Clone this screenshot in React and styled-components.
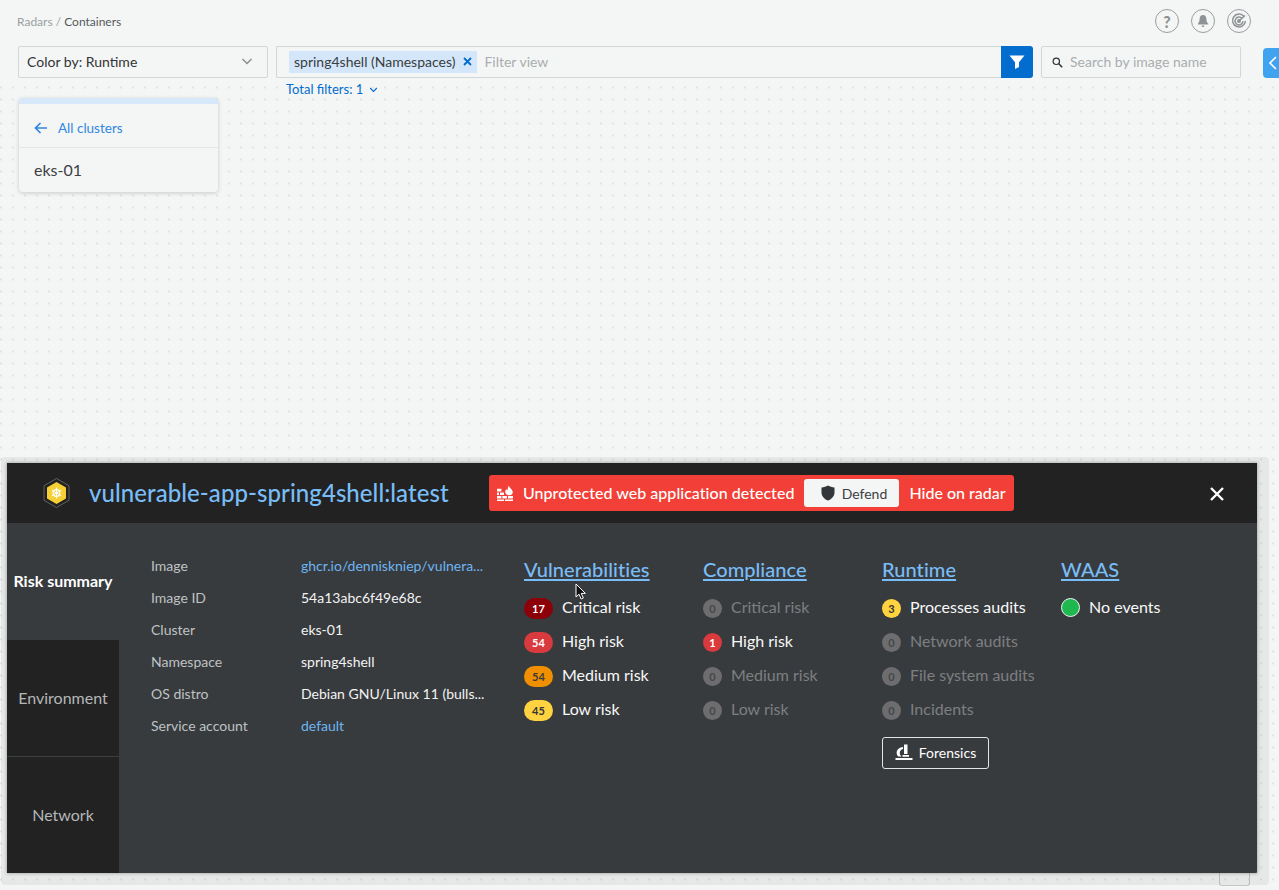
import styled, { createGlobalStyle } from "styled-components";

const Global = createGlobalStyle`
  html, body { margin: 0; padding: 0; height: 100%; overflow: hidden; }
  body { background: #f4f6f6; font-family: Lato, "Open Sans", sans-serif; color: #3c4043; }
  * { box-sizing: border-box; }
`;

const Page = styled.div`
  position: relative;
  width: 1279px;
  height: 890px;
  overflow: hidden;
`;

const Top = styled.header`
  height: 84px;
  padding: 0 0 0 18px;
`;

const TopRow = styled.div`
  display: flex;
  align-items: center;
  justify-content: space-between;
  height: 42px;
  margin-bottom: 4px;
  padding-right: 28px;
`;

const Crumbs = styled.div`
  font-size: 12px;
  color: #9a9fa1;
  margin-left: -1px;
  b { font-weight: 400; color: #55595c; }
`;

const TopIcons = styled.div`
  display: flex;
  gap: 12px;
`;

const RoundIcon = styled.span`
  width: 24px;
  height: 24px;
  border: 1px solid #9a9d9f;
  border-radius: 50%;
  display: flex;
  align-items: center;
  justify-content: center;
  color: #8f9294;
  font-size: 16px;
  font-weight: 900;
`;

const Controls = styled.div`
  display: flex;
  align-items: flex-start;
  & > * { flex-shrink: 0; }
`;

const Select = styled.div`
  width: 250px;
  height: 32px;
  background: #f4f6f6;
  border: 1px solid #d3d6d7;
  border-radius: 2px;
  padding: 0 14px 2px 8px;
  display: flex;
  align-items: center;
  justify-content: space-between;
  font-size: 14px;
  color: #333;
`;

const FilterBox = styled.div`
  width: 725px;
  height: 32px;
  margin-left: 8px;
  border: 1px solid #d3d6d7;
  border-right: 0;
  border-radius: 2px 0 0 2px;
  padding: 0 0 0 12px;
  display: flex;
  align-items: center;
  gap: 7px;
`;

const Chip = styled.span`
  height: 22px;
  background: #d4e7fa;
  padding: 0 5px 1px;
  display: flex;
  align-items: center;
  gap: 8px;
  font-size: 14px;
  color: #3a3d40;
`;

const Placeholder = styled.span`
  font-size: 14px;
  color: #a9adaf;
  padding-bottom: 1px;
`;

const FilterButton = styled.button`
  width: 32px;
  height: 32px;
  border: 0;
  padding: 0;
  background: #026ccf;
  border-radius: 0 3px 3px 0;
  display: flex;
  align-items: center;
  justify-content: center;
`;

const Search = styled.div`
  width: 200px;
  height: 32px;
  margin-left: 8px;
  border: 1px solid #d3d6d7;
  border-radius: 2px;
  padding: 0 0 0 10px;
  display: flex;
  align-items: center;
  gap: 7px;
`;

const SideTab = styled.div`
  width: 30px;
  height: 30px;
  margin: 2px 0 0 22px;
  background: #3fa3f0;
  border-radius: 4px 0 0 4px;
  display: flex;
  align-items: center;
  padding-left: 5px;
`;

const Canvas = styled.main`
  height: 806px;
  padding: 0 0 0 19px;
  background-image: radial-gradient(circle, #e0e3e3 1px, transparent 1.4px);
  background-size: 12px 12px;
  background-position: -5px -2.5px;
`;

const TotalFilters = styled.div`
  height: 10px;
  margin-left: 267px;
  margin-bottom: 4px;
  display: flex;
  align-items: center;
  gap: 6px;
  font-size: 13px;
  color: #026ccf;
`;

const ClusterCard = styled.section`
  width: 199px;
  height: 94px;
  background: #f4f6f6;
  border-top: 6px solid #d6e8fa;
  border-radius: 4px;
  box-shadow: 0 1px 4px rgba(0, 0, 0, 0.18);
`;

const BackRow = styled.div`
  height: 44px;
  padding: 4px 0 0 15px;
  display: flex;
  align-items: center;
  gap: 10px;
  font-size: 13.5px;
  color: #2f86de;
  border-bottom: 1px solid #e3e6e6;
`;

const ClusterName = styled.div`
  height: 44px;
  padding: 0 0 2px 15px;
  display: flex;
  align-items: center;
  font-size: 16px;
  color: #3c4043;
`;

const Drawer = styled.section`
  position: absolute;
  left: 7px;
  top: 463px;
  width: 1250px;
  height: 410px;
  display: flex;
  flex-direction: column;
  background: #383b3e;
  box-shadow: 0 0 3px 1px rgba(0, 0, 0, 0.22), 3px 3px 0 9px rgba(0, 0, 0, 0.055);
  border-radius: 1px;
`;

const LowerTab = styled.div`
  position: absolute;
  left: 1219px;
  top: 873px;
  width: 31px;
  height: 13px;
  border: 1px solid #c4c7c8;
  border-top: 0;
  border-radius: 0 0 3px 3px;
`;

const DrawerHead = styled.div`
  height: 60px;
  flex-shrink: 0;
  background: #222;
  display: flex;
  align-items: center;
  padding-left: 35px;
`;

const Title = styled.h1`
  margin: 0 0 2px 18px;
  width: 400px;
  font-size: 24px;
  font-weight: 500;
  letter-spacing: 0.06px;
  color: #79bdf7;
  white-space: nowrap;
`;

const Alert = styled.div`
  height: 36px;
  width: 525px;
  background: #f23f37;
  border-radius: 3px;
  display: flex;
  align-items: center;
  padding: 0 0 0 7px;
  color: #fff;
  font-size: 16px;
  font-weight: 500;
  white-space: nowrap;
`;

const AlertText = styled.span`
  margin: 0 0 2px 9px;
  letter-spacing: 0.03px;
`;

const HideLink = styled.span`
  margin-bottom: 2px;
`;

const Defend = styled.button`
  width: 95px;
  height: 28px;
  margin: 0 10px 0 10px;
  border: 0;
  padding: 0 0 0 4px;
  background: #f4f6f6;
  border-radius: 3px;
  display: flex;
  align-items: center;
  justify-content: center;
  gap: 7px;
  font-family: inherit;
  font-size: 14px;
  color: #3c4043;
`;

const Close = styled.span`
  margin: 2px 0 0 196px;
  display: flex;
`;

const DrawerBody = styled.div`
  flex: 1;
  display: flex;
`;

const Tabs = styled.nav`
  width: 112px;
  flex-shrink: 0;
  display: flex;
  flex-direction: column;
`;

const Tab = styled.div`
  height: ${(p) => p.$h}px;
  padding-bottom: 2px;
  display: flex;
  align-items: center;
  justify-content: center;
  font-size: 16px;
  white-space: nowrap;
  font-weight: ${(p) => (p.$active ? 700 : 400)};
  color: ${(p) => (p.$active ? "#fff" : "#b4b7b8")};
  background: ${(p) => (p.$active ? "transparent" : "#222")};
  border-top: ${(p) => (p.$line ? "1px solid #3c3e40" : "0")};
`;

const Details = styled.div`
  width: 373px;
  flex-shrink: 0;
  padding: 26px 0 0 32px;
  display: flex;
  flex-direction: column;
`;

const DetailRow = styled.div`
  height: 32px;
  display: flex;
  align-items: center;
  font-size: 14px;
`;

const DetailLabel = styled.span`
  width: 150px;
  flex-shrink: 0;
  color: #bfc2c3;
`;

const DetailValue = styled.span`
  color: ${(p) => (p.$link ? "#6db5f2" : "#f2f3f3")};
  white-space: nowrap;
`;

const Columns = styled.div`
  padding: 31px 0 0 32px;
  display: flex;
`;

const Column = styled.div`
  width: 179px;
  display: flex;
  flex-direction: column;
  align-items: flex-start;
`;

const Heading = styled.a`
  height: 30px;
  font-size: 20px;
  line-height: 30px;
  font-weight: 500;
  letter-spacing: 0.06px;
  color: #79bdf7;
  text-decoration: underline;
  text-decoration-thickness: 1.5px;
  text-underline-offset: 2px;
  margin-bottom: 5px;
`;

const Stat = styled.div`
  height: 34px;
  display: flex;
  align-items: center;
  gap: 9px;
  font-size: 16px;
  white-space: nowrap;
  color: ${(p) => (p.$muted ? "#7d7f81" : "#f7f8f8")};
`;

const Badge = styled.span`
  width: ${(p) => (p.$pill ? 29 : 19)}px;
  height: ${(p) => (p.$pill ? 21 : 19)}px;
  border-radius: 11px;
  display: flex;
  align-items: center;
  justify-content: center;
  font-size: 11px;
  font-weight: 700;
  margin-top: 4px;
  background: ${(p) => p.$bg};
  color: ${(p) => p.$fg};
`;

const GreenDot = styled.span`
  width: 19px;
  height: 19px;
  margin-top: 2px;
  border-radius: 50%;
  background: #1fb84f;
  border: 1px solid #f2f3f3;
`;

const Forensics = styled.button`
  width: 107px;
  height: 32px;
  margin-top: 12px;
  background: transparent;
  border: 1px solid #e4e6e6;
  border-radius: 3px;
  padding: 0 0 1px;
  display: flex;
  align-items: center;
  justify-content: center;
  gap: 6px;
  font-family: inherit;
  font-size: 14px;
  color: #fff;
`;

const Cursor = styled.svg`
  position: absolute;
  left: 575px;
  top: 583px;
`;

const Chevron = ({ size = 12, color = "#8a8e90", width = 1.5 }) => (
  <svg width={size} height={size} viewBox="0 0 12 12" fill="none" stroke={color} strokeWidth={width}>
    <path d="M1.5 4 L6 8.5 L10.5 4" />
  </svg>
);

const vulns = [
  ["17", "Critical risk", "#8c0009", "#fff"],
  ["54", "High risk", "#d93a3e", "#fff"],
  ["54", "Medium risk", "#f09000", "#3c3c3c"],
  ["45", "Low risk", "#ffd23f", "#333"],
];

const compliance = [
  ["0", "Critical risk", true],
  ["1", "High risk", false],
  ["0", "Medium risk", true],
  ["0", "Low risk", true],
];

const runtime = [
  ["3", "Processes audits", false],
  ["0", "Network audits", true],
  ["0", "File system audits", true],
  ["0", "Incidents", true],
];

const details = [
  ["Image", "ghcr.io/denniskniep/vulnera...", true],
  ["Image ID", "54a13abc6f49e68c"],
  ["Cluster", "eks-01"],
  ["Namespace", "spring4shell"],
  ["OS distro", "Debian GNU/Linux 11 (bulls..."],
  ["Service account", "default", true],
];

const Counter = ({ count, label, muted }) => {
  let bg = "#d93a3e";
  let fg = "#fff";
  if (muted) {
    bg = "#6d6d6f";
    fg = "#454749";
  } else if (count === "3") {
    bg = "#ffd23f";
    fg = "#333";
  }
  return (
    <Stat $muted={muted}>
      <Badge $bg={bg} $fg={fg}>{count}</Badge>
      {label}
    </Stat>
  );
};

const App = () => {
  return (
    <Page>
      <Global />
      <Top>
        <TopRow>
          <Crumbs>Radars / <b>Containers</b></Crumbs>
          <TopIcons>
            <RoundIcon>?</RoundIcon>
            <RoundIcon>
              <svg width="14" height="14" viewBox="0 0 14 14" fill="#8f9294">
                <path d="M7 1 C4.6 1 3.6 3 3.6 5 C3.6 7.6 2.6 8.8 1.8 9.8 V10.6 H12.2 V9.8 C11.4 8.8 10.4 7.6 10.4 5 C10.4 3 9.4 1 7 1 Z M5.6 11.4 H8.4 C8.2 12.4 7.6 12.9 7 12.9 C6.4 12.9 5.8 12.4 5.6 11.4 Z" />
              </svg>
            </RoundIcon>
            <RoundIcon>
              <svg width="16" height="16" viewBox="0 0 16 16" fill="none" stroke="#8f9294" strokeWidth="1.5">
                <path d="M13 3.5 A6.4 6.4 0 1 0 14.4 8" />
                <path d="M11 5.5 A3.9 3.9 0 1 0 11.9 8" />
                <path d="M8 8 L14 2.5" />
                <circle cx="8" cy="8" r="1.2" fill="#8f9294" />
              </svg>
            </RoundIcon>
          </TopIcons>
        </TopRow>
        <Controls>
          <Select>
            Color by: Runtime
            <Chevron />
          </Select>
          <FilterBox>
            <Chip>
              spring4shell (Namespaces)
              <svg width="9" height="9" viewBox="0 0 9 9" stroke="#026ccf" strokeWidth="1.8">
                <path d="M1 1 L8 8 M8 1 L1 8" />
              </svg>
            </Chip>
            <Placeholder>Filter view</Placeholder>
          </FilterBox>
          <FilterButton aria-label="Filter">
            <svg width="16" height="16" viewBox="0 0 16 16" fill="#fff">
              <path d="M0.5 1.5 H15.5 L10 8.2 V13 L6 15 V8.2 Z" />
            </svg>
          </FilterButton>
          <Search>
            <svg width="11" height="11" viewBox="0 0 11 11" fill="none" stroke="#333" strokeWidth="1.2">
              <circle cx="4.3" cy="4.3" r="3.2" />
              <path d="M6.8 6.8 L10.2 10.2" strokeWidth="1.6" />
            </svg>
            <Placeholder>Search by image name</Placeholder>
          </Search>
          <SideTab>
            <svg width="10" height="16" viewBox="0 0 10 16" fill="none" stroke="#fff" strokeWidth="1.6">
              <path d="M8 2 L2 8 L8 14" />
            </svg>
          </SideTab>
        </Controls>
      </Top>
      <Canvas>
        <TotalFilters>
          Total filters: 1
          <Chevron size={9} color="#026ccf" />
        </TotalFilters>
        <ClusterCard>
          <BackRow>
            <svg width="14" height="12" viewBox="0 0 14 12" fill="none" stroke="#2f86de" strokeWidth="1.7">
              <path d="M13 6 H2 M6.5 1 L1.5 6 L6.5 11" />
            </svg>
            All clusters
          </BackRow>
          <ClusterName>eks-01</ClusterName>
        </ClusterCard>
      </Canvas>
      <LowerTab />
      <Drawer>
        <DrawerHead>
          <svg width="29" height="32" viewBox="0 0 29 32">
            <path d="M14.5 1.5 L27 8.7 V23.3 L14.5 30.5 L2 23.3 V8.7 Z" fill="none" stroke="#6f7072" strokeWidth="0.8" />
            <path d="M14.5 5 L24 10.5 V21.5 L14.5 27 L5 21.5 V10.5 Z" fill="#f5cf33" />
            <circle cx="14.5" cy="16" r="3.4" fill="none" stroke="#fff" strokeWidth="1.2" />
            <path d="M14.5 10.5 V21.5 M9.7 13.2 L19.3 18.8 M19.3 13.2 L9.7 18.8" stroke="#fff" strokeWidth="1" />
          </svg>
          <Title>vulnerable-app-spring4shell:latest</Title>
          <Alert>
            <svg width="18" height="16" viewBox="0 0 18 16" fill="#fff">
              <path d="M1 3.8 H5.4 V6.4 H1 Z M1 7.4 H3 V10 H1 Z M4 7.4 H8 V10 H4 Z M1 11 H5.4 V13.6 H1 Z M6.4 11 H11 V13.6 H6.4 Z M12 11 H17 V13.6 H12 Z M1 14.4 H8 V16 H1 Z M9 14.4 H17 V16 H9 Z" />
              <path d="M12.8 0.5 C13.3 3 16.8 4.6 16.8 7.2 C16.8 9 15.2 10.2 13.1 10.2 C11 10.2 9.2 9 9.2 7 C9.2 5.8 9.8 4.8 10.6 4 C10.7 4.8 11.1 5.3 11.6 5.5 C11.5 3.8 11.9 2 12.8 0.5 Z" />
            </svg>
            <AlertText>Unprotected web application detected</AlertText>
            <Defend>
              <svg width="14" height="16" viewBox="0 0 14 16" fill="#33373a">
                <path d="M7 0.5 C9 1.6 11 2.2 13.5 2.4 V7.5 C13.5 11.2 10.8 14 7 15.5 C3.2 14 0.5 11.2 0.5 7.5 V2.4 C3 2.2 5 1.6 7 0.5 Z" />
              </svg>
              Defend
            </Defend>
            <HideLink>Hide on radar</HideLink>
          </Alert>
          <Close>
            <svg width="14" height="14" viewBox="0 0 14 14" stroke="#fff" strokeWidth="2.4">
              <path d="M1 1 L13 13 M13 1 L1 13" />
            </svg>
          </Close>
        </DrawerHead>
        <DrawerBody>
          <Tabs>
            <Tab $h={117} $active>Risk summary</Tab>
            <Tab $h={116}>Environment</Tab>
            <Tab $h={117} $line>Network</Tab>
          </Tabs>
          <Details>
            {details.map(([label, value, link]) => (
              <DetailRow key={label}>
                <DetailLabel>{label}</DetailLabel>
                <DetailValue $link={link}>{value}</DetailValue>
              </DetailRow>
            ))}
          </Details>
          <Columns>
            <Column>
              <Heading>Vulnerabilities</Heading>
              {vulns.map(([count, label, bg, fg]) => (
                <Stat key={label}>
                  <Badge $pill $bg={bg} $fg={fg}>{count}</Badge>
                  {label}
                </Stat>
              ))}
            </Column>
            <Column>
              <Heading>Compliance</Heading>
              {compliance.map(([count, label, muted]) => (
                <Counter key={label} count={count} label={label} muted={muted} />
              ))}
            </Column>
            <Column>
              <Heading>Runtime</Heading>
              {runtime.map(([count, label, muted]) => (
                <Counter key={label} count={count} label={label} muted={muted} />
              ))}
              <Forensics>
                <svg width="18" height="17" viewBox="0 0 18 17" fill="#fff">
                  <path d="M9 0.5 H12.5 V10 H9 Z" />
                  <path d="M8 3 V5 C5.8 5.5 4.5 7.4 4.8 9.6 C5 11 5.8 12 6.8 12.6 H3.4 C2 11.4 1.4 9.7 1.7 7.9 C2.2 5.2 4.9 3.2 8 3 Z" />
                  <path d="M0.5 14 H17.5 V16 H0.5 Z M7.5 11 H14 V12.8 H7.5 Z" />
                </svg>
                Forensics
              </Forensics>
            </Column>
            <Column>
              <Heading>WAAS</Heading>
              <Stat>
                <GreenDot />
                No events
              </Stat>
            </Column>
          </Columns>
        </DrawerBody>
      </Drawer>
      <Cursor width="12" height="18" viewBox="0 0 12 18">
        <path d="M1 1 V14 L4 11.2 L6.2 16 L8.4 15 L6.2 10.4 H10.4 Z" fill="#111" stroke="#fff" strokeWidth="1" />
      </Cursor>
    </Page>
  );
};

export default App;
